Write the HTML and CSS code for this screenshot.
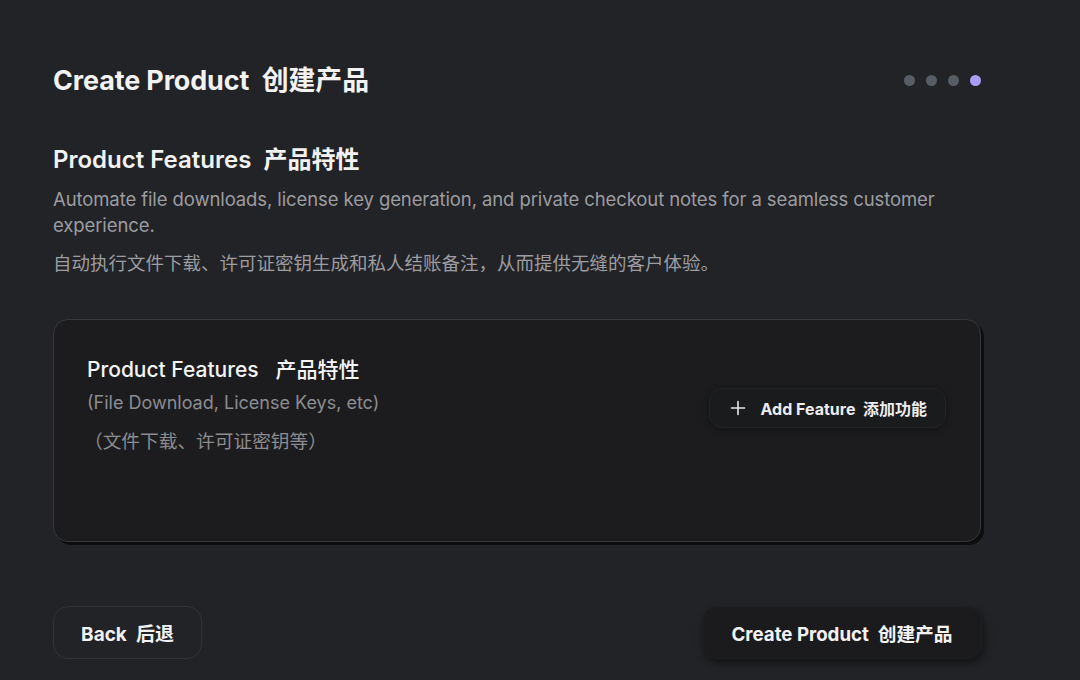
FILE: index.html
```html
<!DOCTYPE html>
<html lang="en">
<head>
<meta charset="utf-8">
<link rel="stylesheet" href="styles.css">
</head>
<body>
<div class="page">
  <header class="top">
    <h1 class="title">Create Product&nbsp; 创建产品</h1>
    <div class="dots">
      <span class="dot"></span><span class="dot"></span><span class="dot"></span><span class="dot active"></span>
    </div>
  </header>
  <section class="intro">
    <h2 class="heading">Product Features&nbsp; 产品特性</h2>
    <p class="desc">Automate file downloads, license key generation, and private checkout notes for a seamless customer experience.</p>
    <p class="desc cn">自动执行文件下载、许可证密钥生成和私人结账备注，从而提供无缝的客户体验。</p>
  </section>
  <div class="card">
    <div class="card-text">
      <div class="card-title">Product Features&nbsp;&nbsp; 产品特性</div>
      <div class="card-sub">(File Download, License Keys, etc)</div>
      <div class="card-sub cn">（文件下载、许可证密钥等）</div>
    </div>
    <button class="add-btn">
      <svg width="16" height="16" viewBox="0 0 16 16" fill="none" stroke="#e8e8ea" stroke-width="1.6" stroke-linecap="round"><path d="M8 1.5v13M1.5 8h13"/></svg>
      <span>Add Feature&nbsp; 添加功能</span>
    </button>
  </div>
  <footer class="actions">
    <button class="btn back">Back&nbsp; 后退</button>
    <button class="btn create">Create Product&nbsp; 创建产品</button>
  </footer>
</div>
</body>
</html>
```
FILE: styles.css
```css
* { box-sizing: border-box; }
html, body {
  margin: 0;
  height: 100%;
  background: #222326;
}
body {
  font-family: Inter, "Noto Sans CJK SC", sans-serif;
  color: #f2f2f3;
}
.page {
  width: 928px;
  margin-left: 53px;
  padding-top: 62px;
}
.top {
  display: flex;
  align-items: center;
  justify-content: space-between;
}
.title {
  margin: 0;
  font-size: 26.9px;
  font-weight: 700;
  line-height: 36px;
  letter-spacing: -0.1px;
}
.dots {
  display: flex;
  gap: 11px;
}
.dot {
  width: 11px;
  height: 11px;
  border-radius: 50%;
  background: #585c65;
}
.dot.active { background: #a99cfb; }
.intro { margin-top: 46px; }
.heading {
  margin: 0;
  font-size: 24px;
  font-weight: 600;
  line-height: 32px;
}
.desc {
  margin: 10px 0 0;
  font-size: 18.5px;
  line-height: 26px;
  color: #9c9ca1;
  letter-spacing: -0.1px;
  padding-right: 20px;
}
.desc.cn { margin-top: 12px; letter-spacing: 0; }
.card {
  margin-top: 43px;
  height: 223px;
  background: #1c1c1e;
  border: 1px solid #37383c;
  border-radius: 15px;
  box-shadow: 3px 3px 0 #0d0d0e;
  padding: 36px 33px 0 33px;
  display: flex;
  justify-content: space-between;
  align-items: flex-start;
}
.card-title {
  font-size: 21px;
  line-height: 28px;
  font-weight: 500;
  color: #f4f4f5;
}
.card-sub {
  margin-top: 7px;
  font-size: 18px;
  line-height: 24px;
  color: #8c8c91;
}
.card-sub.cn { margin-top: 15px; margin-left: -3px; font-size: 18.7px; }
.add-btn {
  margin-top: 32px;
  display: flex;
  align-items: center;
  gap: 14px;
  height: 40px;
  padding: 0 18px 0 20px;
  background: #1a1b1d;
  border: 1px solid #232427;
  border-radius: 13px;
  box-shadow: 0 2px 6px rgba(0,0,0,0.35);
  color: #ececee;
  font-family: inherit;
  font-size: 16px;
  font-weight: 700;
  margin-right: 1px;
}
.actions {
  margin-top: 64px;
  display: flex;
  justify-content: space-between;
}
.btn {
  height: 53px;
  border-radius: 15px;
  font-family: inherit;
  font-size: 19px;
  font-weight: 700;
  color: #f2f2f3;
}
.back {
  width: 149px;
  background: transparent;
  border: 1px solid #323337;
}
.create {
  width: 280px;
  font-size: 18.7px;
  background: #1b1b1d;
  border: 1px solid #1f2022;
  box-shadow: 2px 4px 8px rgba(0,0,0,0.45);
  margin-right: -1px;
}
```
